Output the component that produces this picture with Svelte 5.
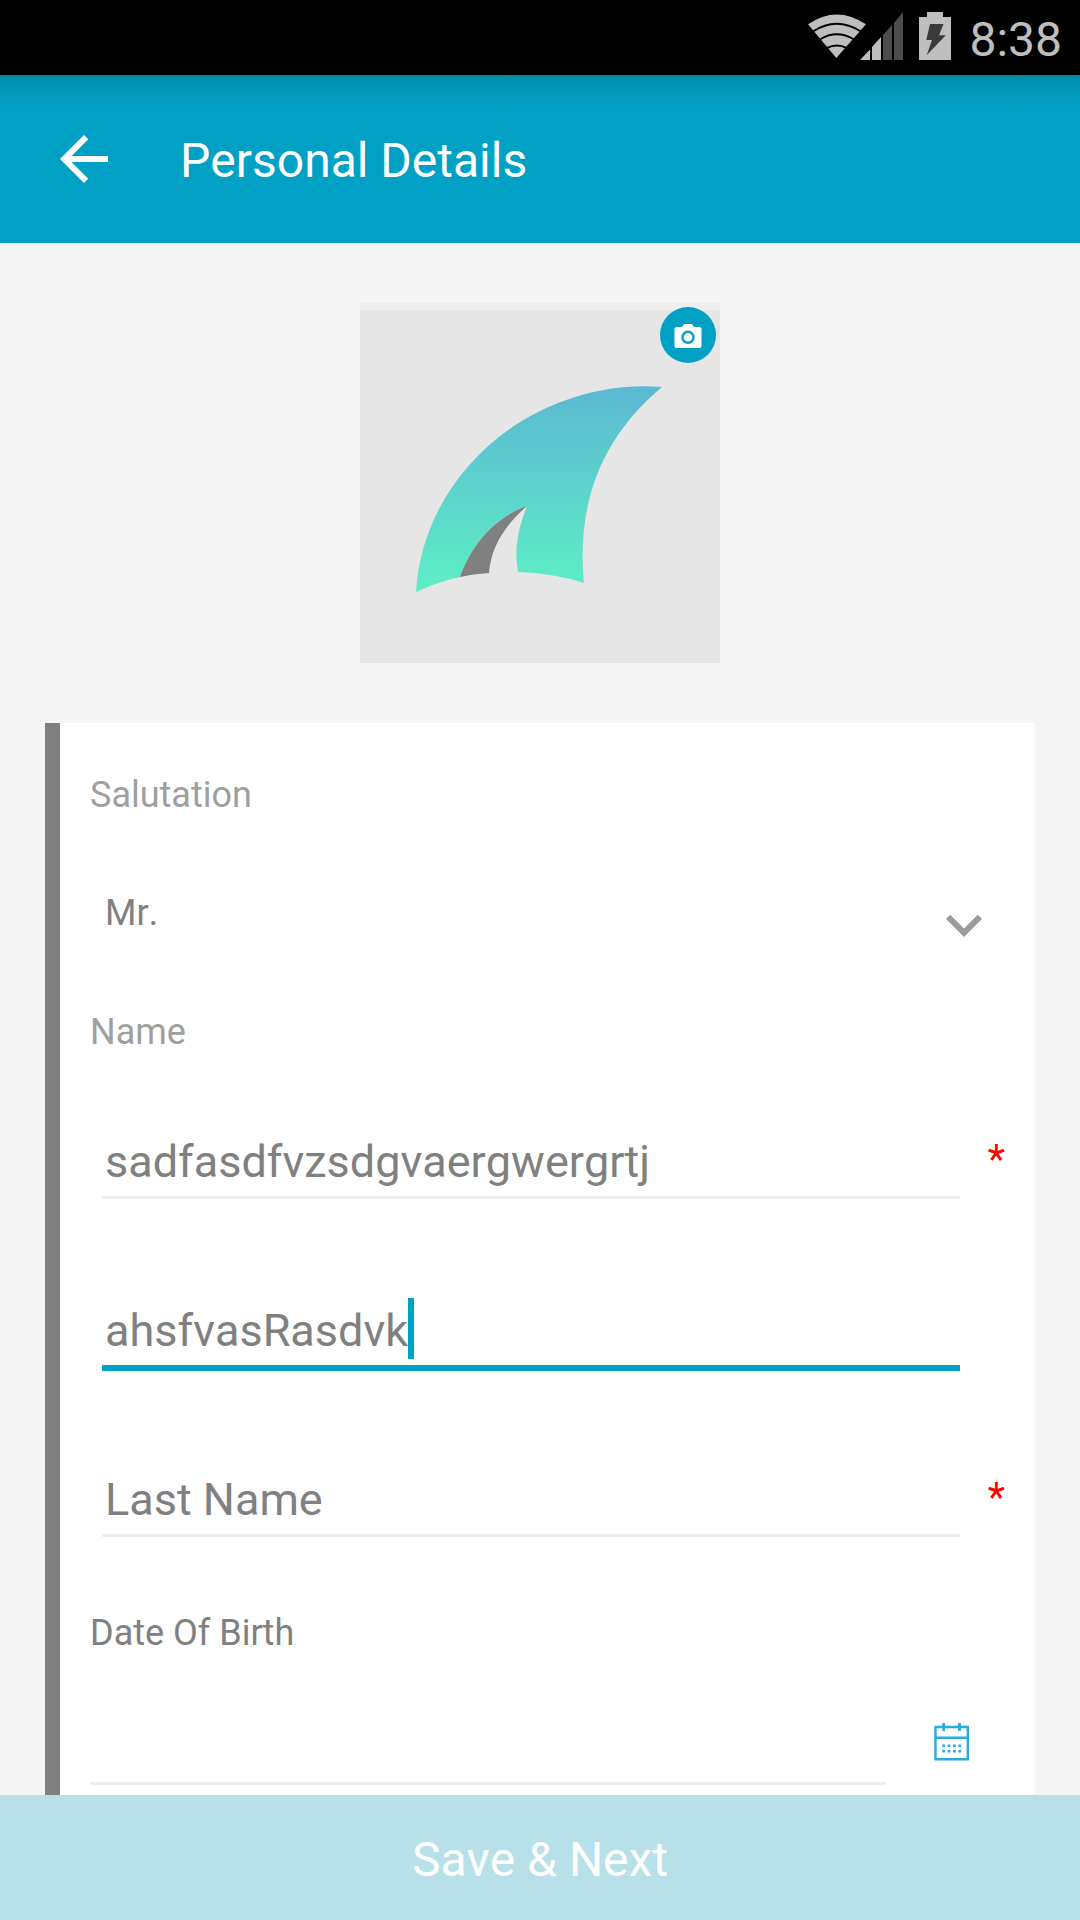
<script>
  let salutation = $state('Mr.');
  let firstName = $state('sadfasdfvzsdgvaergwergrtj');
  let middleName = $state('ahsfvasRasdvk');
  let lastName = $state('');
  let birthDate = $state('');
</script>

<div class="screen">
  <div class="status">
    <svg class="network" viewBox="0 0 95 48" aria-hidden="true">
      <path d="M28.3 46 L0 12.3 Q28.5 -7.5 58 12.3 Z" fill="#bebebe" />
      <g fill="none" stroke="#000" stroke-width="2">
        <path d="M5 19.5 Q28.5 4 53 19.5" />
        <path d="M12 27.5 Q28.5 17 46 27.5" />
        <path d="M19 36 Q28.5 31 39 36" />
      </g>
      <path d="M52 48 L62 37.5 V48 Z M64 35 L73 25 V48 H64 Z" fill="#bebebe" />
      <path d="M75 23 L84 13 V48 H75 Z M86 11 L95 0 V48 H86 Z" fill="#4c4c4c" />
    </svg>
    <svg class="battery" viewBox="0 0 32 48" aria-hidden="true">
      <path d="M8 0 H24 V5 H32 V48 H0 V5 H8 Z" fill="#bebebe" />
      <path d="M11 12 H24.5 L20 23.3 H26.7 L7.7 43.3 L13 28 H7.3 Z" fill="#3a3a3a" />
    </svg>
    <span class="clock">8:38</span>
  </div>

  <header>
    <button class="back" aria-label="Back">
      <svg viewBox="0 0 24 24" aria-hidden="true">
        <path d="M20 11H7.83l5.59-5.59L12 4l-8 8 8 8 1.41-1.41L7.83 13H20z" fill="#fff" />
      </svg>
    </button>
    <h1>Personal Details</h1>
  </header>

  <main>
    <div class="photo">
      <svg class="logo" viewBox="0 0 360 360" role="img" aria-label="Profile picture">
        <defs>
          <linearGradient id="fin" x1="0" y1="0" x2="0" y2="1">
            <stop offset="0" stop-color="#5bb8d2" />
            <stop offset="1" stop-color="#5eefc5" />
          </linearGradient>
        </defs>
        <path
          d="M302 84 C245 79 193 98 157 121 C98 159 60 221 56 289 Q77 279 100 274 C112 240 136 214 167 203 C158 226 154 246 158 269 Q193 270 224 280 C216 200 242 134 302 84 Z"
          fill="url(#fin)"
        />
        <path d="M100 274 C112 240 136 214 167 203 C145 222 131 244 129 270 Q113 271 100 274 Z" fill="#808080" />
      </svg>
      <button class="camera" aria-label="Change picture">
        <svg viewBox="0 0 56 56" aria-hidden="true">
          <path
            d="M16.5 20 H22 L24 17 H32 L34 20 H39.5 Q41.5 20 41.5 22 V39 Q41.5 41 39.5 41 H16.5 Q14.5 41 14.5 39 V22 Q14.5 20 16.5 20 Z"
            fill="#fff"
          />
          <circle cx="28" cy="30.3" r="5.5" fill="#fff" stroke="#00a1c5" stroke-width="2.4" />
        </svg>
      </button>
    </div>

    <form class="card">
      <label class="caption" for="salutation">Salutation</label>
      <div class="picker">
        <select id="salutation" bind:value={salutation}>
          <option>Mr.</option>
          <option>Mrs.</option>
          <option>Ms.</option>
        </select>
        <svg viewBox="0 0 24 24" aria-hidden="true">
          <path d="M16.6 8.9 12 13.5 7.4 8.9 6 10.3l6 6 6-6z" fill="#9b9b9b" />
        </svg>
      </div>

      <label class="caption" for="first">Name</label>
      <div class="row">
        <div class="field"><input id="first" bind:value={firstName} /></div>
        <span class="required">*</span>
      </div>
      <div class="row">
        <div class="field active">
          <input aria-label="Middle Name" bind:value={middleName} /><span class="caret"></span>
        </div>
      </div>
      <div class="row">
        <div class="field"><input aria-label="Last Name" placeholder="Last Name" bind:value={lastName} /></div>
        <span class="required">*</span>
      </div>

      <label class="caption birth" for="birth">Date Of Birth</label>
      <div class="date">
        <div class="field"><input id="birth" bind:value={birthDate} /></div>
        <button type="button" class="calendar" aria-label="Pick a date">
          <svg viewBox="0 0 36 38" aria-hidden="true">
            <g fill="none" stroke="#29abe2" stroke-width="2.4">
              <path d="M1.5 4 H33.8 V36.3 H1.5 Z M1.5 14.8 H33.8" />
              <path d="M9.7 0 V8 M25.5 0 V8" stroke-width="2.8" />
              <path d="M8.2 22.8 H27.2 M8.2 28.2 H27.2" stroke-dasharray="2.8 2.6" />
            </g>
          </svg>
        </button>
      </div>
    </form>
  </main>

  <button class="save">Save &amp; Next</button>
</div>

<style>
  :global(body) {
    margin: 0;
  }
  .screen {
    display: flex;
    flex-direction: column;
    height: 100vh;
    background: #f5f5f5;
    font-family: Roboto, 'Liberation Sans', sans-serif;
    font-kerning: none;
    color: #808080;
  }
  .screen * {
    box-sizing: border-box;
  }
  svg {
    display: block;
  }
  button {
    border: 0;
    padding: 0;
    background: none;
    font: inherit;
    font-kerning: none;
    cursor: pointer;
  }
  .status {
    display: flex;
    justify-content: flex-end;
    align-items: flex-start;
    gap: 16px;
    height: 75px;
    padding: 12px 18px 0 0;
    background: #000;
    flex: none;
  }
  .network {
    width: 95px;
    height: 48px;
  }
  .battery {
    width: 32px;
    height: 48px;
  }
  .clock {
    padding-left: 2px;
    font-size: 48px;
    line-height: 56px;
    color: #bebebe;
  }
  header {
    display: flex;
    align-items: center;
    gap: 60px;
    height: 168px;
    padding: 0 48px;
    background: linear-gradient(#0087a7, #0096b8 12px, #00a1c5 36px);
    flex: none;
  }
  .back svg {
    width: 72px;
    height: 72px;
  }
  h1 {
    margin: 0;
    padding-top: 4px;
    font-size: 48px;
    line-height: 60px;
    font-weight: 400;
    color: #fff;
  }
  main {
    flex: 1;
    min-height: 0;
    padding: 60px 45px 0;
    overflow-y: auto;
    scrollbar-width: none;
  }
  .photo {
    position: relative;
    width: 360px;
    margin: 0 auto 60px;
    border-top: 7px solid #eee;
    background: #e6e6e6;
  }
  .logo {
    width: 360px;
    height: 360px;
    margin-top: -7px;
  }
  .camera {
    position: absolute;
    top: -3px;
    right: 4px;
    width: 56px;
    height: 56px;
    border-radius: 50%;
    background: #00a1c5;
  }
  .card {
    display: flex;
    flex-direction: column;
    padding: 48px 30px;
    border-left: 15px solid #808080;
    background: #fff;
  }
  .caption {
    font-size: 36px;
    line-height: 48px;
    color: #9f9f9f;
  }
  .birth {
    margin-top: 46px;
    color: #808080;
  }
  .picker {
    display: grid;
    height: 93px;
    margin: 48px 0;
  }
  .picker select,
  .picker svg {
    grid-area: 1 / 1;
  }
  .picker select {
    appearance: none;
    border: 0;
    padding: 0 15px 2px;
    background: none;
    font: inherit;
    font-kerning: none;
    font-size: 36px;
    color: #808080;
  }
  .picker svg {
    width: 72px;
    height: 72px;
    margin-right: 5px;
    place-self: end;
    pointer-events: none;
  }
  .row {
    display: flex;
    align-items: flex-start;
    height: 169px;
    padding: 72px 45px 0 12px;
  }
  .field {
    display: flex;
    align-items: flex-start;
    flex: 1;
    min-width: 0;
    border-bottom: 3px solid #eee;
  }
  .field.active {
    border-bottom: 6px solid #00a1c5;
  }
  input {
    flex: 1;
    min-width: 0;
    height: 68px;
    border: 0;
    padding: 0 0 2px 3px;
    outline: 0;
    background: none;
    font: inherit;
    font-kerning: none;
    font-size: 45px;
    color: #808080;
  }
  input::placeholder {
    color: #808080;
    opacity: 1;
  }
  .active input {
    flex: none;
    field-sizing: content;
  }
  .caret {
    width: 6px;
    height: 61px;
    margin-top: 1px;
    background: #00a1c5;
  }
  .required {
    width: 45px;
    margin-right: -45px;
    font-size: 40px;
    line-height: 64px;
    text-align: right;
    color: #f00;
  }
  .date {
    display: flex;
    align-items: flex-start;
    gap: 48px;
    margin-top: 57px;
    padding-right: 35px;
  }
  .calendar {
    display: grid;
    align-items: center;
    width: 36px;
    height: 56px;
  }
  .calendar svg {
    width: 36px;
    height: 38px;
  }
  .save {
    flex: none;
    height: 125px;
    padding-top: 4px;
    background: #b7e0e8;
    font-size: 48px;
    color: #fff;
  }
</style>
